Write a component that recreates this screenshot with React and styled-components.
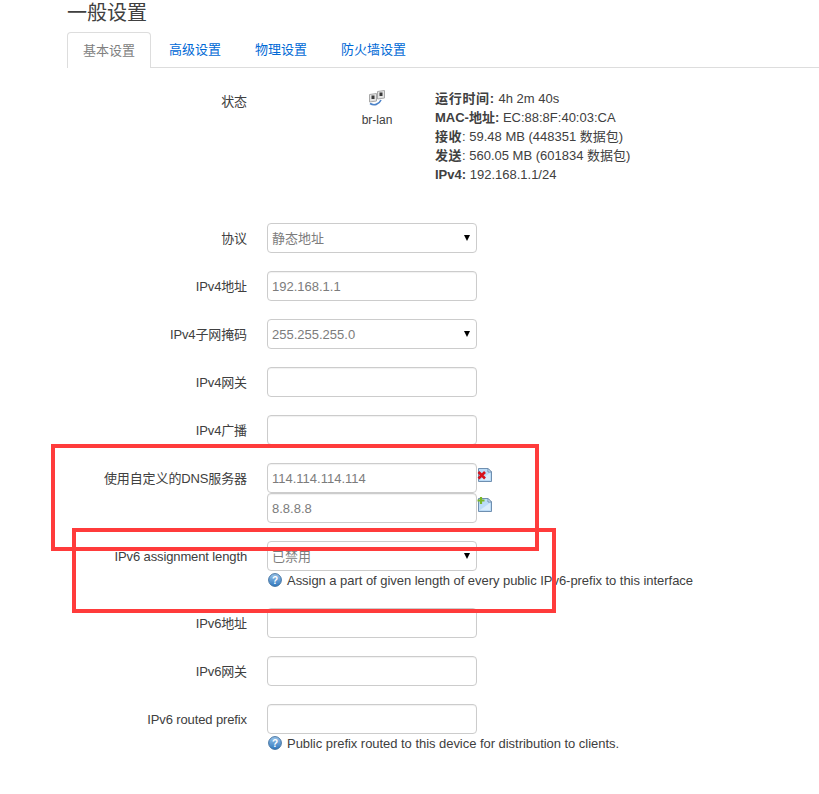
import React from "react";
import styled, { createGlobalStyle } from "styled-components";

const Global = createGlobalStyle`
  html, body { margin: 0; padding: 0; background: #fff; }
  body { font-family: "Liberation Sans", "Noto Sans CJK SC", sans-serif; font-size: 13px; color: #404040; overflow: hidden; }
`;

const Page = styled.div`
  position: relative;
  width: 819px;
  height: 794px;
  overflow: hidden;
  padding-left: 67px;
  box-sizing: border-box;
`;
const Title = styled.h2`
  margin: 0;
  height: 32px;
  padding-top: 1px;
  box-sizing: border-box;
  font-size: 20px;
  line-height: 24px;
  font-weight: 400;
  color: #404040;
`;
const Tabs = styled.ul`
  display: flex;
  margin: 0;
  padding: 0;
  list-style: none;
  height: 35px;
  border-bottom: 1px solid #ddd;
  box-sizing: content-box;
`;
const Tab = styled.li`
  height: 35px;
  padding: 0 16px 0 18px;
  box-sizing: border-box;
  font-size: 13px;
  line-height: 36px;
  color: #0069d6;
  background: #fff;
`;
const ActiveTab = styled(Tab)`
  height: 36px;
  padding: 0 15px;
  border: 1px solid #ddd;
  border-bottom: 0;
  border-radius: 4px 4px 0 0;
  line-height: 35px;
  color: #808080;
`;
const Form = styled.div`
  margin-left: -67px;
  padding-top: 22px;
`;
const Row = styled.div`
  display: grid;
  grid-template-columns: 247px 1fr;
  column-gap: 20px;
  margin-bottom: 18px;
`;
const Label = styled.div`
  height: 30px;
  text-align: right;
  font-size: 13px;
  line-height: 31px;
  letter-spacing: -0.12px;
  color: #404040;
`;
const StatusRow = styled(Row)`
  height: 133px;
  margin-bottom: 0;
`;
const StatusLabel = styled(Label)`
  line-height: 18px;
  padding-top: 3px;
`;
const StatusBody = styled.div`
  display: flex;
`;
const Device = styled.div`
  width: 60px;
  margin-left: 80px;
  display: flex;
  flex-direction: column;
  align-items: center;
  font-size: 12px;
  color: #404040;
`;
const DeviceName = styled.span`
  margin-top: 5px;
  line-height: 18px;
`;
const Info = styled.div`
  margin-left: 28px;
  margin-top: -1px;
  line-height: 19px;
  font-size: 13px;
  white-space: nowrap;
  color: #404040;
`;
const InfoKey = styled.strong`
  font-weight: 700;
  letter-spacing: ${p => p.$track || 0}px;
`;
const Control = styled.div`
  display: flex;
  flex-direction: column;
`;
const InputLine = styled.div`
  display: flex;
  align-items: flex-start;
  svg { margin-top: 4px; }
`;
const Input = styled.input`
  width: 210px;
  height: 30px;
  box-sizing: border-box;
  padding: 0 4px;
  border: 1px solid #ccc;
  border-radius: 4px;
  font: 13px "Liberation Sans", "Noto Sans CJK SC", sans-serif;
  color: #7c7c7c;
  background: #fff;
  outline: 0;
  box-shadow: inset 0 1px 1px rgba(0,0,0,.06);
`;
const SelectWrap = styled.div`
  position: relative;
  width: 210px;
  height: 30px;
  &::after {
    content: "";
    position: absolute;
    right: 7px;
    top: 12px;
    border-left: 3.5px solid transparent;
    border-right: 3.5px solid transparent;
    border-top: 6px solid #000;
    pointer-events: none;
  }
`;
const Select = styled.select`
  appearance: none;
  width: 210px;
  height: 30px;
  box-sizing: border-box;
  padding: 0 4px;
  border: 1px solid #ccc;
  border-radius: 4px;
  background: #fff;
  font: 13px "Liberation Sans", "Noto Sans CJK SC", sans-serif;
  color: #7c7c7c;
  outline: 0;
`;
const Help = styled.div`
  display: flex;
  align-items: center;
  gap: 5px;
  height: 18px;
  padding: 0 0 1px 1px;
  font-size: 13px;
  letter-spacing: -0.04px;
  white-space: nowrap;
  color: #404040;
`;
const Marker = styled.div`
  position: absolute;
  border: 4px solid #ff3b3b;
  box-sizing: border-box;
  pointer-events: none;
`;

const NetIcon = () => (
  <svg width="18" height="16" viewBox="0 0 18 16">
    <path d="M9.5 1.5L16.5 0.5V8L9.5 9Z" fill="#e4e4e4" stroke="#a8a8a8" />
    <rect x="11.5" y="2.5" width="3" height="3.5" fill="#3a3a3a" />
    <path d="M1.5 4.5L8.5 3.5V11L1.5 12Z" fill="#e4e4e4" stroke="#a8a8a8" />
    <rect x="3.5" y="5.5" width="3" height="3.5" fill="#3a3a3a" />
    <path d="M2 13.5C6 16 11 14.5 13 10" fill="none" stroke="#4b82c8" strokeWidth="1.6" />
  </svg>
);
const DocBase = () => (
  <>
    <path d="M1.5 1.5H11L14.5 5V14.5H1.5Z" fill="#bcdcf7" stroke="#6f8fb0" />
    <path d="M11 1.5V5H14.5Z" fill="#eef6fd" stroke="#6f8fb0" />
    <path d="M3 13H13V6Z" fill="#d9ecfb" />
  </>
);
const RemoveIcon = () => (
  <svg width="16" height="16" viewBox="0 0 16 16">
    <DocBase />
    <path d="M1.5 5L8 11.5M8 5L1.5 11.5" stroke="#d8121c" strokeWidth="2.6" />
  </svg>
);
const AddIcon = () => (
  <svg width="16" height="16" viewBox="0 0 16 16">
    <DocBase />
    <path d="M4 0V7M0.5 3.5H7.5" stroke="#7ab828" strokeWidth="2.2" />
  </svg>
);
const HelpIcon = () => (
  <svg width="14" height="14" viewBox="0 0 14 14" style={{ flex: "none" }}>
    <defs>
      <linearGradient id="hg" x1="0" y1="0" x2="0" y2="1">
        <stop offset="0" stopColor="#9cc5ea" />
        <stop offset="1" stopColor="#2f78bf" />
      </linearGradient>
    </defs>
    <circle cx="7" cy="7" r="6.4" fill="url(#hg)" stroke="#3b6b9a" strokeWidth="0.9" />
    <text x="7" y="10.5" textAnchor="middle" fontSize="10" fontWeight="700" fontFamily="Liberation Sans" fill="#fff">?</text>
  </svg>
);

const Field = ({ label, value = "" }) => (
  <Row>
    <Label>{label}</Label>
    <Control>
      <Input readOnly value={value} />
    </Control>
  </Row>
);
const SelectField = ({ label, value, help }) => (
  <Row>
    <Label>{label}</Label>
    <Control>
      <SelectWrap>
        <Select value={value} onChange={() => {}}>
          <option>{value}</option>
        </Select>
      </SelectWrap>
      {help && <Help><HelpIcon />{help}</Help>}
    </Control>
  </Row>
);

export default function App() {
  return (
    <Page>
      <Global />
      <Title>一般设置</Title>
      <Tabs>
        <ActiveTab>基本设置</ActiveTab>
        <Tab>高级设置</Tab>
        <Tab>物理设置</Tab>
        <Tab>防火墙设置</Tab>
      </Tabs>
      <Form>
        <StatusRow>
          <StatusLabel>状态</StatusLabel>
          <StatusBody>
            <Device>
              <NetIcon />
              <DeviceName>br-lan</DeviceName>
            </Device>
            <Info>
              <div><InfoKey $track={0.7}>运行时间:</InfoKey> 4h 2m 40s</div>
              <div><InfoKey>MAC-地址:</InfoKey> EC:88:8F:40:03:CA</div>
              <div><InfoKey $track={0.5}>接收</InfoKey>: 59.48 MB (448351 数据包)</div>
              <div><InfoKey $track={0.5}>发送</InfoKey>: 560.05 MB (601834 数据包)</div>
              <div><InfoKey>IPv4:</InfoKey> 192.168.1.1/24</div>
            </Info>
          </StatusBody>
        </StatusRow>
        <SelectField label="协议" value="静态地址" />
        <Field label="IPv4地址" value="192.168.1.1" />
        <SelectField label="IPv4子网掩码" value="255.255.255.0" />
        <Field label="IPv4网关" />
        <Field label="IPv4广播" />
        <Row>
          <Label>使用自定义的DNS服务器</Label>
          <Control>
            <InputLine>
              <Input readOnly value="114.114.114.114" />
              <RemoveIcon />
            </InputLine>
            <InputLine>
              <Input readOnly value="8.8.8.8" />
              <AddIcon />
            </InputLine>
          </Control>
        </Row>
        <SelectField label="IPv6 assignment length" value="已禁用" help="Assign a part of given length of every public IPv6-prefix to this interface" />
        <Field label="IPv6地址" />
        <Field label="IPv6网关" />
        <Row>
          <Label>IPv6 routed prefix</Label>
          <Control>
            <Input readOnly value="" />
            <Help><HelpIcon />Public prefix routed to this device for distribution to clients.</Help>
          </Control>
        </Row>
      </Form>
      <Marker style={{ left: 51, top: 444, width: 488, height: 107 }} />
      <Marker style={{ left: 72, top: 528, width: 484, height: 85 }} />
    </Page>
  );
}
